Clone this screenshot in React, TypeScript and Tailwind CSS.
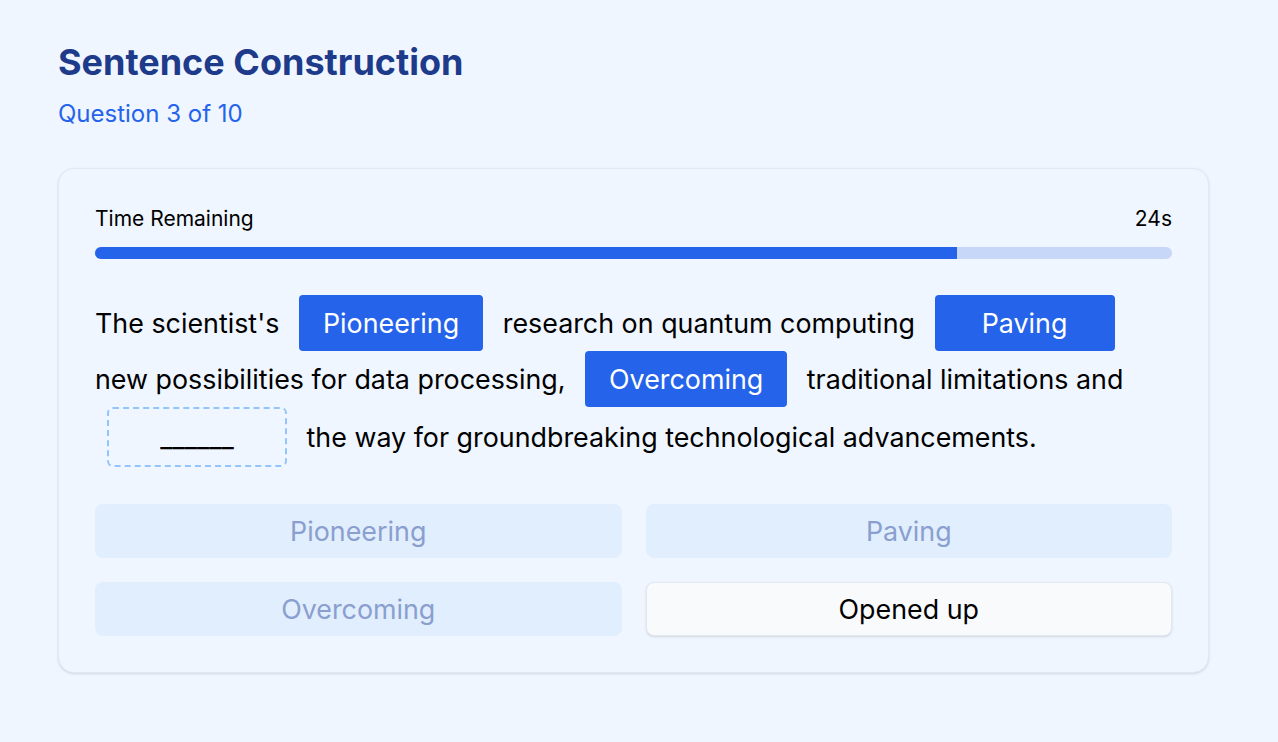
import { useState } from "react";

const options = ["Pioneering", "Paving", "Overcoming", "Opened up"];
const used = ["Pioneering", "Paving", "Overcoming"];

function Chip({ word }: { word: string }) {
  return (
    <span className="mx-3 inline-block min-w-[180px] rounded bg-[#2563eb] px-6 py-3 text-center text-white">
      {word}
    </span>
  );
}

export default function App() {
  const [timeLeft] = useState(24);

  return (
    <div
      className="min-h-screen bg-[#eff6ff] px-[58px] pt-[40px] text-black"
      style={{ fontFamily: "Inter, 'Noto Sans', sans-serif" }}
    >
      <h1 className="text-[36px] font-bold leading-[44px] text-[#1e3a8a]">Sentence Construction</h1>
      <p className="mt-[14px] text-[24px] leading-[32px] text-[#2563eb]">Question 3 of 10</p>

      {/* Card */}
      <div className="mt-[38px] w-[1151px] rounded-2xl border border-[#e2e8f0] bg-[#eff6ff] p-9 shadow-sm">
        <div className="flex items-center justify-between text-[21px] leading-[28px]">
          <span>Time Remaining</span>
          <span>{timeLeft}s</span>
        </div>
        <div className="mt-[14px] h-3 w-full overflow-hidden rounded-full bg-[#c6d7f7]">
          <div className="h-full w-[80%] bg-[#2563eb]" />
        </div>

        <p className="mt-[36px] text-[26.85px] leading-[32px]">
          The scientist's <Chip word="Pioneering" /> research on quantum computing <Chip word="Paving" /> new
          possibilities for data processing, <Chip word="Overcoming" /> traditional limitations and{" "}
          <span className="mx-3 inline-block min-w-[180px] rounded-md border-2 border-dashed border-[#93c5fd] px-6 py-3 text-center">
            ______
          </span>{" "}
          the way for groundbreaking technological advancements.
        </p>

        <div className="mt-[37px] grid grid-cols-2 gap-6">
          {options.map((o) => {
            const isUsed = used.includes(o);
            return (
              <button
                key={o}
                className={`h-[54px] rounded-lg text-[26.85px] ${
                  isUsed
                    ? "bg-[#e1eefd] text-[#8a9fcf]"
                    : "border border-[#e2e8f0] bg-[#f8fafc] text-black shadow-sm"
                }`}
              >
                {o}
              </button>
            );
          })}
        </div>
      </div>
    </div>
  );
}
